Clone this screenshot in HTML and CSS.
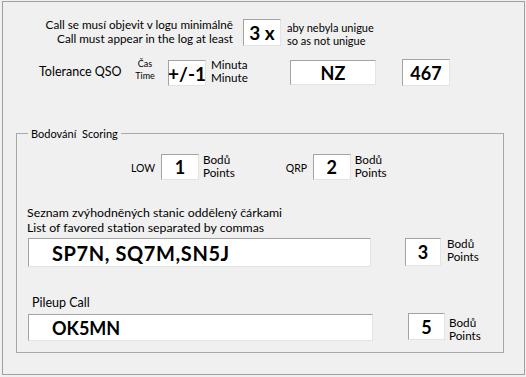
FILE: index.html
```html
<!DOCTYPE html>
<html>
<head>
<meta charset="utf-8">
<link rel="stylesheet" href="styles.css">
</head>
<body>
<div class="frame">
  <div class="row1">
    <div class="lab-min">Call se musí objevit v logu minimálně<br>Call must appear in the log at least</div>
    <div class="box box-3x">3 x</div>
    <div class="lab-uniq">aby nebyla unigue<br>so as not unigue</div>
  </div>
  <div class="row2">
    <div class="lab-tol">Tolerance QSO</div>
    <div class="lab-cas">Čas<br>Time</div>
    <div class="box box-tol">+/-1</div>
    <div class="lab-min2">Minuta<br>Minute</div>
    <div class="box box-nz">NZ</div>
    <div class="box box-467">467</div>
  </div>
  <fieldset class="group">
    <legend>Bodování&nbsp; Scoring</legend>
    <div class="row-score">
      <div class="lab-low">LOW</div>
      <div class="box box-pt">1</div>
      <div class="lab-pts">Bodů<br>Points</div>
      <div class="lab-qrp">QRP</div>
      <div class="box box-pt">2</div>
      <div class="lab-pts">Bodů<br>Points</div>
    </div>
    <div class="lab-list">Seznam zvýhodněných stanic oddělený čárkami<br>List of favored station separated by commas</div>
    <div class="row-in1">
      <div class="box box-wide">SP7N, SQ7M,SN5J</div>
      <div class="box box-p3">3</div>
      <div class="lab-pts lab-p3">Bodů<br>Points</div>
    </div>
    <div class="lab-pile">Pileup Call</div>
    <div class="row-in2">
      <div class="box box-wide2">OK5MN</div>
      <div class="box box-p5">5</div>
      <div class="lab-pts lab-p5">Bodů<br>Points</div>
    </div>
  </fieldset>
</div>
</body>
</html>
```
FILE: styles.css
```css
html, body {
  margin: 0;
  padding: 0;
  background: #f0f0f0;
}
body {
  font-family: Lato, "Open Sans", sans-serif;
  font-size: 11px;
  color: #000;
}
.frame {
  margin: 1px 0 0 2px;
  width: 523px;
  height: 374px;
  box-sizing: border-box;
  border: 1px solid #a0a0a0;
  display: flex;
  flex-direction: column;
}
.box {
  box-sizing: border-box;
  background: #fff;
  border: 1px solid;
  border-color: #a3a3a3 #e3e3e3 #e3e3e3 #a3a3a3;
  font-weight: 700;
  font-size: 18px;
  display: flex;
  align-items: center;
  justify-content: center;
  color: #000;
}
.row1 {
  display: flex;
  margin-top: 15px;
  height: 30px;
}
.lab-min {
  width: 230px;
  text-align: right;
  line-height: 14px;
  font-size: 11.7px;
}
.box-3x {
  margin-left: 10px;
  margin-top: 2px;
  width: 38px;
  height: 27px;
  font-size: 19px;
}
.lab-uniq {
  margin-left: 6px;
  margin-top: 4px;
  line-height: 13px;
}
.row2 {
  display: flex;
  margin-top: 11px;
  height: 28px;
  align-items: flex-start;
}
.lab-tol {
  margin-left: 36px;
  margin-top: 6px;
  font-size: 12.5px;
  width: 96px;
}
.lab-cas {
  font-size: 9px;
  line-height: 12px;
  text-align: center;
  width: 20px;
}
.box-tol {
  margin-left: 13px;
  margin-top: 2px;
  width: 38px;
  height: 26px;
  font-size: 19px;
}
.lab-min2 {
  margin-left: 5px;
  line-height: 12.5px;
  width: 79px;
  font-size: 11.7px;
}
.box-nz {
  margin-top: 2px;
  width: 86px;
  height: 25px;
}
.box-467 {
  margin-left: 26px;
  margin-top: 1px;
  width: 48px;
  height: 27px;
}
.group {
  margin: 39px 0 0 13px;
  padding: 0;
  width: 488px;
  height: 228px;
  box-sizing: border-box;
  border: 1px solid #a8a8a8;
  min-width: 0;
}
.group legend {
  margin-left: 11px;
  padding: 0 3px;
  font-size: 11px;
  line-height: 17px;
}
.row-score {
  display: flex;
  margin-top: 11px;
  height: 27px;
  align-items: flex-start;
}
.lab-low, .lab-qrp {
  margin-top: 9px;
  width: 30px;
  font-size: 10.5px;
}
.lab-low {
  margin-left: 114px;
}
.lab-qrp {
  margin-left: 51px;
  width: 27px;
}
.box-pt {
  width: 38px;
  height: 26px;
  margin-top: 1px;
}
.lab-pts {
  margin-left: 4px;
  line-height: 12.5px;
  font-size: 11.7px;
}
.lab-list {
  margin: 25px 0 0 10px;
  line-height: 15px;
  font-size: 12.3px;
}
.row-in1 {
  display: flex;
  margin-top: 3px;
  height: 30px;
  align-items: flex-start;
}
.box-wide {
  margin-left: 11px;
  width: 343px;
  height: 29px;
  justify-content: flex-start;
  padding-left: 23px;
  font-size: 20px;
  letter-spacing: 0.6px;
}
.box-p3 {
  margin-left: 34px;
  width: 36px;
  height: 28px;
}
.lab-p3 {
  margin-left: 6px;
  margin-top: -1px;
}
.lab-pile {
  margin: 28px 0 0 15px;
  line-height: 13px;
  font-size: 12.5px;
}
.row-in2 {
  display: flex;
  margin-top: 5px;
  height: 28px;
  align-items: flex-start;
}
.box-wide2 {
  margin-left: 11px;
  width: 345px;
  height: 27px;
  justify-content: flex-start;
  padding-left: 23px;
}
.box-p5 {
  margin-left: 35px;
  margin-top: -1px;
  width: 37px;
  height: 27px;
}
.lab-p5 {
  margin-top: 2px;
}
```
